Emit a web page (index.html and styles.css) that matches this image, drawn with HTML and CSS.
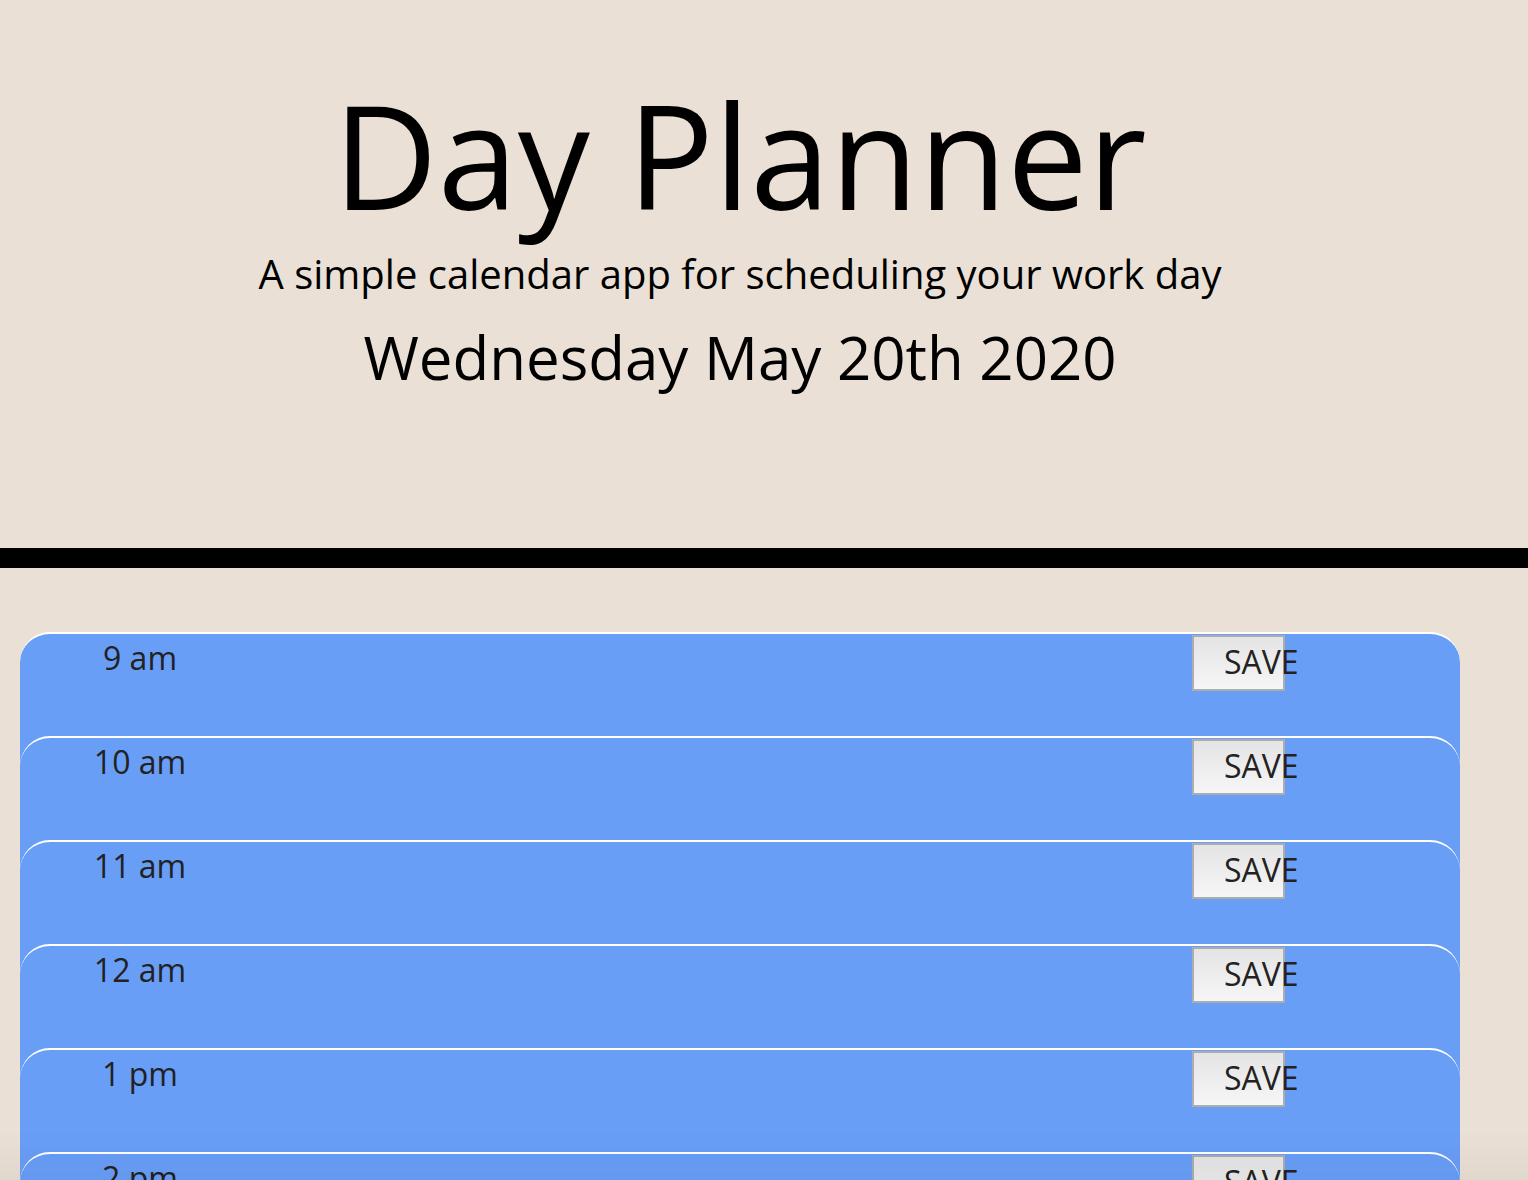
FILE: index.html
```html
<!DOCTYPE html>
<html lang="en">
<head>
<meta charset="utf-8">
<title>Day Planner</title>
<link rel="stylesheet" href="styles.css">
</head>
<body>
<header class="jumbotron">
  <div class="jumbotron-inner">
    <h1 class="title">Day Planner</h1>
    <p class="lead">A simple calendar app for scheduling your work day</p>
    <p class="current-day">Wednesday May 20th 2020</p>
  </div>
</header>
<main class="schedule">
  <div class="time-block">
    <div class="hour">9 am</div>
    <textarea class="description" aria-label="9 am"></textarea>
    <button class="save-btn">SAVE</button>
  </div>
  <div class="time-block">
    <div class="hour">10 am</div>
    <textarea class="description" aria-label="10 am"></textarea>
    <button class="save-btn">SAVE</button>
  </div>
  <div class="time-block">
    <div class="hour">11 am</div>
    <textarea class="description" aria-label="11 am"></textarea>
    <button class="save-btn">SAVE</button>
  </div>
  <div class="time-block">
    <div class="hour">12 am</div>
    <textarea class="description" aria-label="12 am"></textarea>
    <button class="save-btn">SAVE</button>
  </div>
  <div class="time-block">
    <div class="hour">1 pm</div>
    <textarea class="description" aria-label="1 pm"></textarea>
    <button class="save-btn">SAVE</button>
  </div>
  <div class="time-block">
    <div class="hour">2 pm</div>
    <textarea class="description" aria-label="2 pm"></textarea>
    <button class="save-btn">SAVE</button>
  </div>
</main>
<div class="screen-shade"></div>
</body>
</html>
```

FILE: styles.css
```css
* {
  box-sizing: border-box;
}

html, body {
  margin: 0;
  padding: 0;
}

body {
  background: #eae0d5;
  font-family: "Open Sans", "Noto Sans", sans-serif;
  color: #000;
}

.jumbotron {
  border-bottom: 20px solid #000;
}

.jumbotron-inner {
  width: 1480px;
  padding: 68px 0 146px;
  text-align: center;
}

.title {
  margin: 0;
  font-size: 144px;
  font-weight: 400;
  line-height: 172px;
}

.lead {
  margin: 4px 0 0;
  font-size: 40px;
  line-height: 60px;
}

.current-day {
  margin: 8px 0 0;
  font-size: 60px;
  line-height: 90px;
}

.schedule {
  width: 1480px;
  padding: 64px 20px 0;
}

.time-block {
  display: flex;
  align-items: flex-start;
  height: 134px;
  margin-bottom: -30px;
  background: #699ef7;
  border-top: 2px solid #ffffff;
  border-radius: 30px 30px 0 0;
}

.hour {
  width: 240px;
  flex: none;
  text-align: center;
  font-size: 32px;
  line-height: 48px;
  color: #222222;
}

.description {
  width: 932px;
  height: 102px;
  flex: none;
  margin: 0;
  padding: 0;
  border: none;
  background: transparent;
  resize: none;
  outline: none;
  font-family: inherit;
}

.save-btn {
  width: 93px;
  height: 56px;
  flex: none;
  margin: 1px 0 0;
  padding: 0 0 3px 30px;
  border: 2px solid #adadad;
  border-radius: 0;
  background: linear-gradient(#e4e4e4, #f6f6f6);
  font-family: "Open Sans", "Noto Sans", sans-serif;
  font-size: 32px;
  line-height: 48px;
  color: #222222;
  text-align: left;
  white-space: nowrap;
  overflow: visible;
}

.screen-shade {
  position: fixed;
  left: 0;
  right: 0;
  bottom: 0;
  height: 50px;
  pointer-events: none;
  background: linear-gradient(rgba(0, 0, 0, 0), rgba(0, 0, 0, 0.035));
}
```
